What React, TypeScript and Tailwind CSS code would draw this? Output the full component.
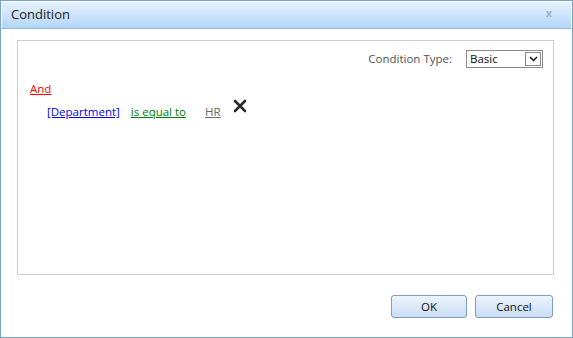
export default function App() {
  return (
    <div
      className="w-[573px] h-[338px] bg-white border border-[#7aa3c8] flex flex-col text-[11.5px] text-[#333]"
      style={{ fontFamily: '"Open Sans", "Noto Sans", sans-serif' }}
    >
      {/* title bar */}
      <div className="h-[28px] shrink-0 flex items-center justify-between px-[9px] border border-white border-b-[#8fb7dc] bg-gradient-to-b from-[#e6f1fd] to-[#b3d6f7]">
        <span className="text-[13px] text-[#1a1a1a]">Condition</span>
        <span className="text-[11px] font-bold text-[#9fb2c4] mr-[10px] -mt-[4px]">x</span>
      </div>

      {/* body */}
      <div className="flex-1 flex flex-col pl-[16px] pr-[18px] pt-[11px]">
        <div className="h-[235px] border border-[#cccccc] flex flex-col px-[12px] pt-[9px]">
          <div className="flex items-center justify-end gap-[14px] -mr-[2px]">
            <span className="text-[#555]">Condition Type:</span>
            <div className="w-[77px] h-[18px] border border-[#8b8b8b] flex items-center justify-between pl-[3px] pr-[1px] bg-white">
              <span className="text-[#111] leading-none">Basic</span>
              <div className="w-[16px] h-[14px] border border-[#8b8b8b] flex items-center justify-center">
                <svg width="9" height="6" viewBox="0 0 9 6">
                  <path d="M1 1 L4.5 4.5 L8 1" stroke="#111" strokeWidth="1.5" fill="none" />
                </svg>
              </div>
            </div>
          </div>
          <div className="mt-[12px]">
            <span className="text-[#f00] underline">And</span>
          </div>
          <div className="mt-[6px] pl-[17px] flex items-center">
            <span className="text-[#0000ee] underline">[Department]</span>
            <span className="text-[#008000] underline ml-[11px]">is equal to</span>
            <span className="text-[#666] underline ml-[19px]">HR</span>
            <svg className="ml-[12px] -mt-[12px]" width="14" height="14" viewBox="0 0 14 14">
              <path d="M2 2 L12 12 M12 2 L2 12" stroke="#2b2b2b" strokeWidth="2.6" strokeLinecap="round" />
            </svg>
          </div>
        </div>

        <div className="flex justify-end gap-[8px] mt-[20px] mr-[1px]">
          <button className="w-[76px] h-[23px] rounded-[3px] border border-[#7c9ec4] bg-gradient-to-b from-[#edf4fc] to-[#c8ddf4] text-[#111]">
            OK
          </button>
          <button className="w-[78px] h-[23px] rounded-[3px] border border-[#7c9ec4] bg-gradient-to-b from-[#edf4fc] to-[#c8ddf4] text-[#111]">
            Cancel
          </button>
        </div>
      </div>
    </div>
  )
}
